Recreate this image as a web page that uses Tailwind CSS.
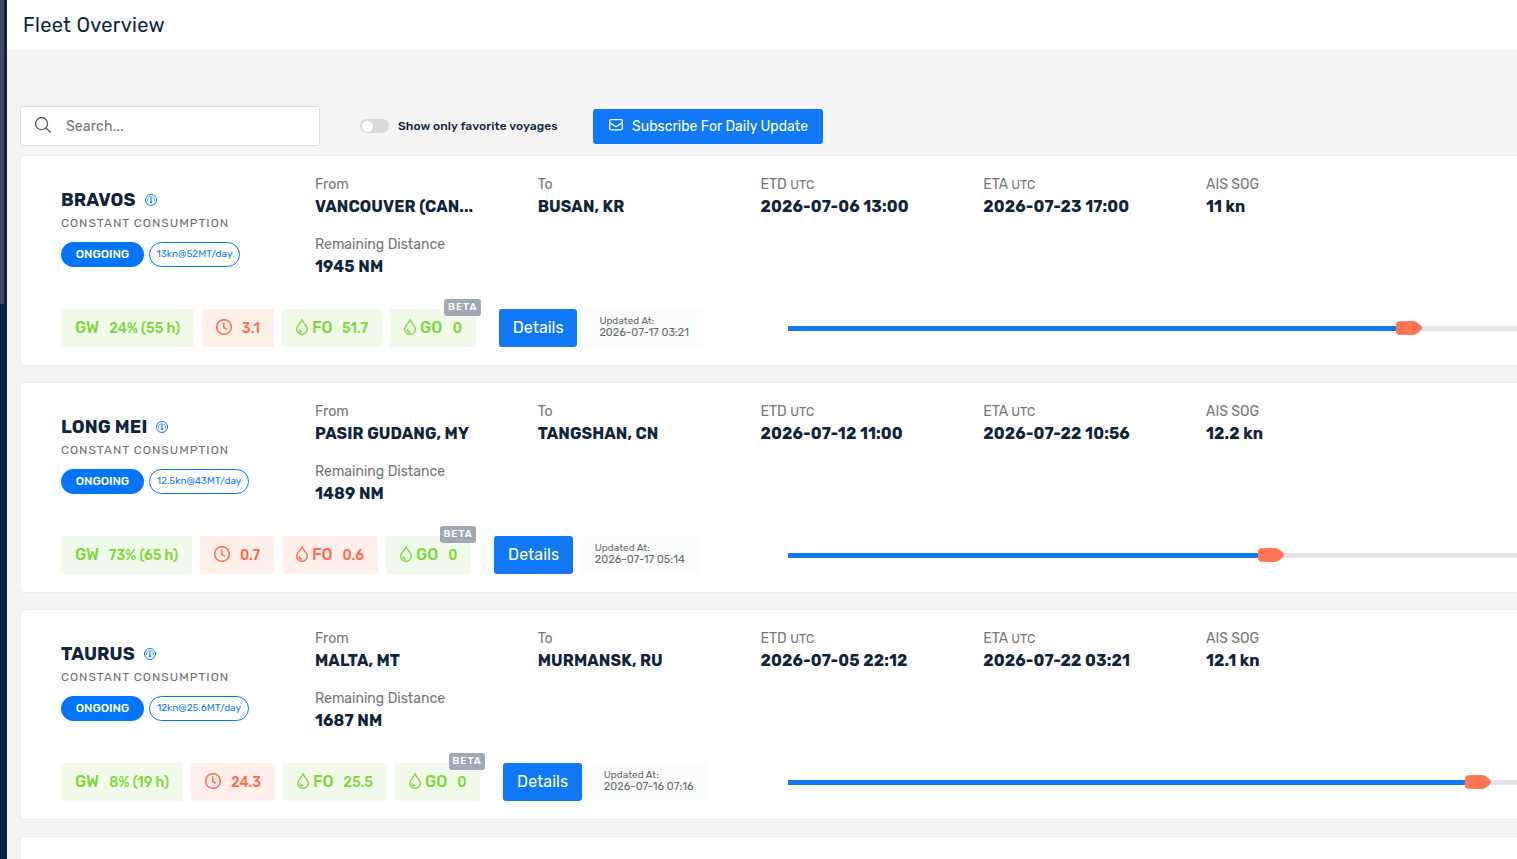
<!DOCTYPE html>
<html lang="en">
<head>
  <meta charset="UTF-8" />
  <meta name="viewport" content="width=device-width, initial-scale=1.0"/>
  <title>Fleet Overview</title>
  <script src="https://cdn.jsdelivr.net/npm/@tailwindcss/browser@4"></script>
</head>
<body class="font-['Rubik',Roboto,sans-serif] text-[#10243a] bg-[#f4f4f4]">
  <div class="flex h-screen overflow-hidden">

    <!-- Sidebar edge -->
    <aside class="w-[7px] shrink-0 bg-[#0d2344]">
      <div class="w-1 h-[304px] bg-[#3e4c66]"></div>
    </aside>

    <main class="flex-1 min-w-0 overflow-hidden">
      <header class="h-[50px] bg-white pl-4 flex items-center">
        <h1 class="text-[20px] tracking-[0.3px]">Fleet Overview</h1>
      </header>

      <!-- Toolbar -->
      <div class="flex items-center h-10 mt-14 ml-[13px]">
        <label class="w-[300px] h-10 bg-white border border-[#dcdcdc] rounded-[3px] flex items-center pl-3.5">
          <svg class="w-4 h-4 mb-0.5 text-[#50575e]" viewBox="0 0 16 16" fill="none" stroke="currentColor" stroke-width="1.3">
            <circle cx="6.6" cy="6.6" r="6" />
            <path d="M11 11l4.6 4.6" />
          </svg>
          <input type="text" placeholder="Search..." class="ml-[15px] w-48 pt-px text-[14px] tracking-[0.15px] placeholder:text-[#757575] outline-none" />
        </label>
        <div class="ml-10 w-[29px] h-3.5 rounded-full bg-[#dadada] flex items-center pl-0.5">
          <span class="w-[11px] h-[11px] rounded-full bg-white"></span>
        </div>
        <span class="ml-[9px] w-[195px] text-[12px] font-medium tracking-[0.1px] whitespace-nowrap">Show only favorite voyages</span>
        <button class="w-[230px] h-[35px] bg-[#1178f7] text-white rounded-[3px] flex items-center pl-4 text-[14px] whitespace-nowrap">
          <svg class="w-3.5 h-3 mr-[9px] mb-0.5" viewBox="0 0 14 12" fill="none" stroke="currentColor" stroke-width="1.3">
            <rect x="0.65" y="0.65" width="12.7" height="10.2" rx="1.5" />
            <path d="M0.8 3.4l4.7 3.6q1.5 1 3 0l4.7-3.6" />
          </svg>
          <span class="tracking-[0.02px]">Subscribe For Daily Update</span>
        </button>
      </div>

      <div id="voyages" class="mt-[9px] ml-[13px] w-[1640px] space-y-4"></div>
    </main>
  </div>

  <script>
    const voyages = [
      { name: 'BRAVOS', speed: '13kn@52MT/day', speedWidth: 91, from: 'VANCOUVER (CAN...', to: 'BUSAN, KR', etd: '2026-07-06 13:00', eta: '2026-07-23 17:00', sog: '11 kn', distance: '1945 NM', gw: '24% (55 h)', delay: '3.1', fo: '51.7', foOk: true, widths: [133, 72, 100, 86], updated: '2026-07-17 03:21', sailed: 608 },
      { name: 'LONG MEI', speed: '12.5kn@43MT/day', speedWidth: 100, from: 'PASIR GUDANG, MY', to: 'TANGSHAN, CN', etd: '2026-07-12 11:00', eta: '2026-07-22 10:56', sog: '12.2 kn', distance: '1489 NM', gw: '73% (65 h)', delay: '0.7', fo: '0.6', foOk: false, widths: [131, 74, 96, 85.4], updated: '2026-07-17 05:14', sailed: 470 },
      { name: 'TAURUS', speed: '12kn@25.6MT/day', speedWidth: 100, from: 'MALTA, MT', to: 'MURMANSK, RU', etd: '2026-07-05 22:12', eta: '2026-07-22 03:21', sog: '12.1 kn', distance: '1687 NM', gw: '8% (19 h)', delay: '24.3', fo: '25.5', foOk: true, widths: [122, 84, 104, 85.4], updated: '2026-07-16 07:16', sailed: 677 }
    ];

    const good = 'bg-[#f1faea] text-[#7ed53a]';
    const bad = 'bg-[#ffefeb] text-[#ff6a4d]';

    const gaugeIcon = `
      <svg class="w-3 h-3 text-[#1178f7]" viewBox="0 0 12 12" fill="none" stroke="currentColor">
        <circle cx="6" cy="6" r="5.5" />
        <path d="M6 2.2v6" stroke-width="1.1" />
        <circle cx="6" cy="8.3" r="1.1" fill="currentColor" stroke="none" />
        <path d="M2.6 7.2C2.4 5 3.2 3.4 4.6 2.9M9.4 7.2C9.6 5 8.8 3.4 7.4 2.9" stroke-width="0.8" />
      </svg>`;

    const clockIcon = `
      <svg class="w-4 h-4 mb-0.5" viewBox="0 0 16 16" fill="none" stroke="currentColor" stroke-width="1.5">
        <circle cx="8" cy="8" r="7.3" />
        <path d="M7.8 3.5v4.9l3.1 1.9" />
      </svg>`;

    const dropIcon = `
      <svg class="w-3 h-4 mb-0.5" viewBox="0 0 12 16" fill="none" stroke="currentColor" stroke-width="1.4">
        <path d="M6 .9C5.2 3.5.7 6.8.7 10.3a5.3 5 0 0 0 10.6 0C11.3 6.8 6.8 3.5 6 .9z" />
        <path d="M3.2 10.4a2.9 2.6 0 0 0 2.9 2.5" />
      </svg>`;

    function field(label, value) {
      return `
        <div class="h-[60px] whitespace-nowrap">
          <p class="text-[14px] leading-5 text-[#757575]">${label}</p>
          <p class="text-[16px] leading-6 font-bold tracking-[0.1px]">${value}</p>
        </div>`;
    }

    function renderVoyage(v) {
      return `
        <section class="h-[211px] bg-white border border-[#ececec] rounded-[5px] pl-10">
          <div class="flex h-[153px] pt-[19px]">
            <div class="w-[254px] pt-[13px]">
              <div class="flex items-center h-6">
                <h2 class="text-[18px] font-bold tracking-[0.12px] mr-[9px]">${v.name}</h2>
                ${gaugeIcon}
              </div>
              <p class="h-5 mt-px text-[12px] leading-5 tracking-[1px] text-[#6f6f6f]">CONSTANT CONSUMPTION</p>
              <div class="flex gap-[5px] mt-[9px] leading-none whitespace-nowrap">
                <span class="w-[83px] h-[25px] pb-0.5 rounded-full bg-[#0075ff] text-white text-[12px] font-medium tracking-[-0.1px] flex items-center justify-center">ONGOING</span>
                <span class="h-[25px] pb-0.5 rounded-full border border-[#0075ff] text-[#1178f7] text-[10px] flex items-center justify-center" style="width:${v.speedWidth}px">${v.speed}</span>
              </div>
            </div>
            <div class="grid grid-cols-[repeat(5,222.75px)] content-start">
              ${field('From', v.from)}
              ${field('To', v.to)}
              ${field('ETD <span class="text-[12.5px]">UTC</span>', v.etd)}
              ${field('ETA <span class="text-[12.5px]">UTC</span>', v.eta)}
              ${field('AIS SOG', v.sog)}
              ${field('Remaining Distance', v.distance)}
            </div>
          </div>

          <div class="flex h-[38px] whitespace-nowrap font-medium">
            <div class="flex w-[727px] gap-2">
              <div class="${good} rounded-[3px] flex items-center justify-between px-3.5" style="width:${v.widths[0]}px">
                <span class="text-[16px]">GW</span><span class="text-[14px] pt-px">${v.gw}</span>
              </div>
              <div class="${bad} rounded-[3px] flex items-center justify-between px-3.5" style="width:${v.widths[1]}px">
                ${clockIcon}<span class="text-[14px] pt-px">${v.delay}</span>
              </div>
              <div class="${v.foOk ? good : bad} rounded-[3px] flex items-center justify-between px-3.5" style="width:${v.widths[2]}px">
                <span class="flex items-center gap-1 text-[16px]">${dropIcon}FO</span><span class="text-[14px] pt-px">${v.fo}</span>
              </div>
              <div class="${good} relative rounded-[3px] flex items-center justify-between px-3.5" style="width:${v.widths[3]}px">
                <span class="flex items-center gap-1 text-[16px]">${dropIcon}GO</span><span class="text-[14px] pt-px">0</span>
                <span class="absolute -top-2.5 -right-[5px] w-[36.6px] h-[17px] rounded-[3px] bg-[#a0a8b5] text-white text-[10px] tracking-[1px] flex items-center justify-center">BETA</span>
              </div>
              <button class="ml-[15px] w-[78.4px] rounded-[3px] bg-[#1178f7] text-white text-[16px] font-normal">Details</button>
              <div class="w-[118px] rounded-[3px] bg-[#fbfdfc] pl-3.5 pt-[7px] font-normal text-[#6a6a6a]">
                <p class="text-[10px] leading-[11px]">Updated At:</p>
                <p class="text-[11px] leading-3">${v.updated}</p>
              </div>
            </div>
            <div class="flex items-center flex-1">
              <div class="h-[5px] bg-[#1178f7]" style="width:${v.sailed}px"></div>
              <svg class="w-[26px] h-3.5 shrink-0" viewBox="0 0 26 14">
                <path d="M0 4.5h26v5H0z" fill="#e4e4e4" />
                <path d="M3.5.3L17.5 0C21 .8 26 4.7 26 7s-5 6.2-8.5 7L3.5 13.7Q0 13.5 0 10V4Q0 .5 3.5.3z" fill="#ff7452" />
              </svg>
              <div class="h-[5px] flex-1 bg-[#e4e4e4]"></div>
            </div>
          </div>
        </section>`;
    }

    document.getElementById('voyages').innerHTML = voyages.map(renderVoyage).join('') +
      '<section class="h-[211px] bg-white border border-[#ececec] rounded-[5px]"></section>';
  </script>
</body>
</html>
